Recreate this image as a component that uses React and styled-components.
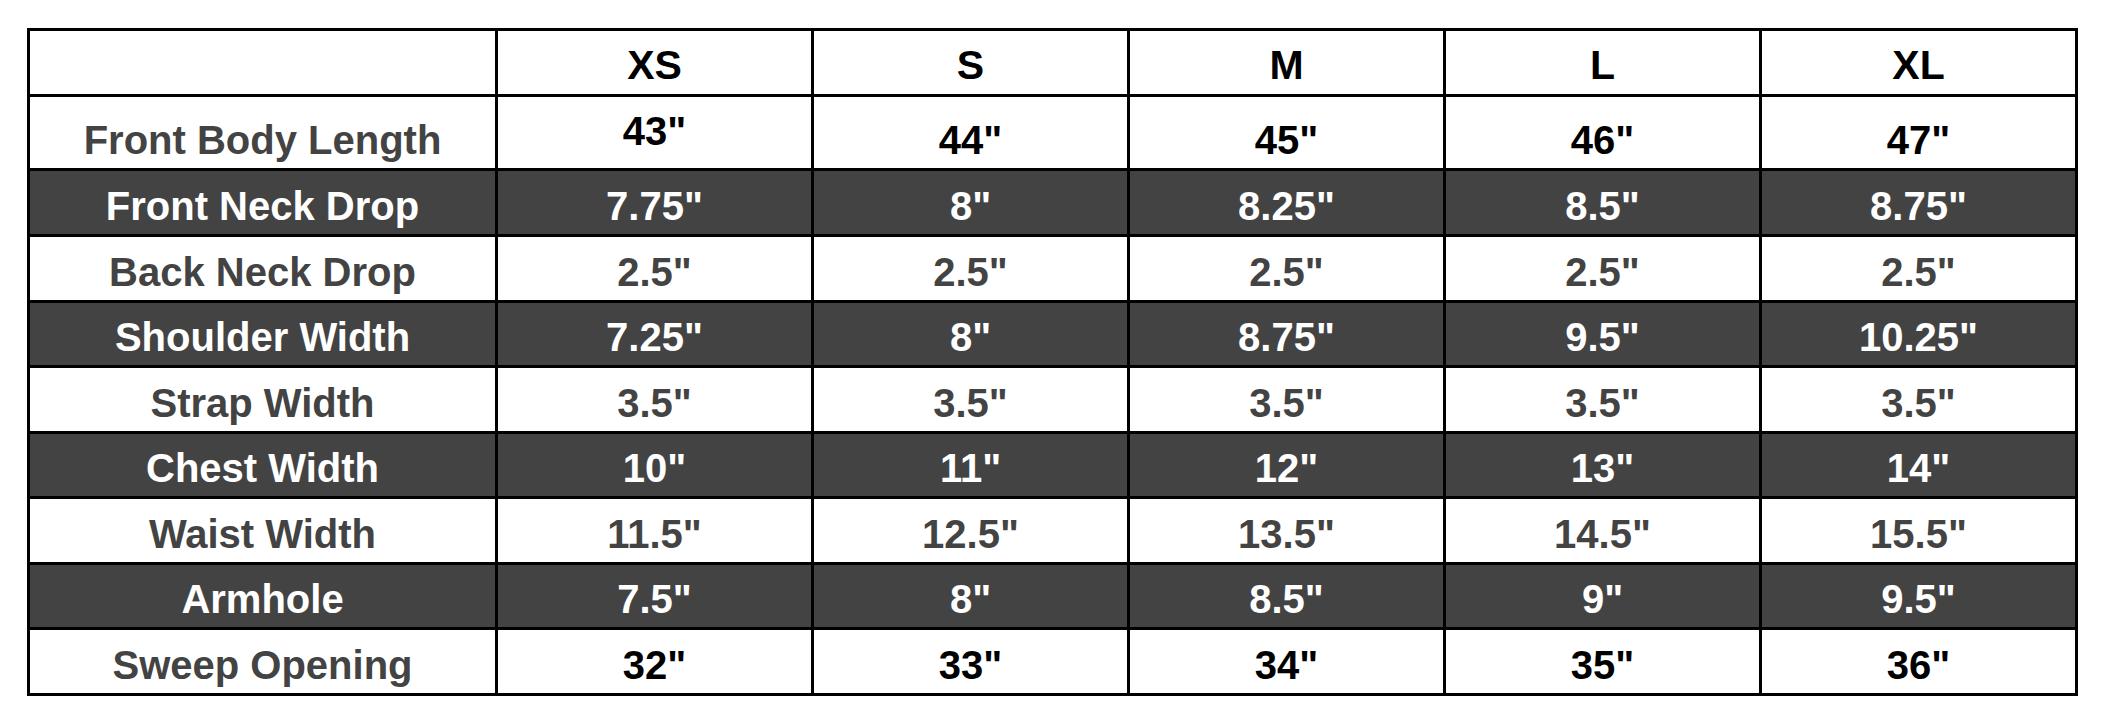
import React from "react";
import styled, { createGlobalStyle } from "styled-components";

const sizes = ["XS", "S", "M", "L", "XL"];

// tone: "light" = white row with grey text, "dark" = grey band, "strong" = white row with black values
const rows = [
  { label: "Front Body Length", tone: "strong", shift: 15, values: ['43"', '44"', '45"', '46"', '47"'], raise: [true] },
  { label: "Front Neck Drop", tone: "dark", values: ['7.75"', '8"', '8.25"', '8.5"', '8.75"'] },
  { label: "Back Neck Drop", tone: "light", values: ['2.5"', '2.5"', '2.5"', '2.5"', '2.5"'] },
  { label: "Shoulder Width", tone: "dark", values: ['7.25"', '8"', '8.75"', '9.5"', '10.25"'] },
  { label: "Strap Width", tone: "light", values: ['3.5"', '3.5"', '3.5"', '3.5"', '3.5"'] },
  { label: "Chest Width", tone: "dark", values: ['10"', '11"', '12"', '13"', '14"'] },
  { label: "Waist Width", tone: "light", values: ['11.5"', '12.5"', '13.5"', '14.5"', '15.5"'] },
  { label: "Armhole", tone: "dark", values: ['7.5"', '8"', '8.5"', '9"', '9.5"'] },
  { label: "Sweep Opening", tone: "strong", values: ['32"', '33"', '34"', '35"', '36"'] },
];

const rowHeights = [71, 63, 63, 62, 63, 62, 63, 62, 63];

function App() {
  return (
    <>
      <GlobalStyle />
      <Page>
        <SizeTable>
          <colgroup>
            <col style={{ width: 465 }} />
            {sizes.map((s) => (
              <col key={s} style={{ width: 313 }} />
            ))}
          </colgroup>
          <thead>
            <tr>
              <HeadCell />
              {sizes.map((s) => (
                <HeadCell key={s}>{s}</HeadCell>
              ))}
            </tr>
          </thead>
          <tbody>
            {rows.map((row, i) => (
              <tr key={row.label}>
                <LabelCell $tone={row.tone} $h={rowHeights[i]} $shift={row.shift}>
                  {row.label}
                </LabelCell>
                {row.values.map((v, j) => (
                  <ValueCell
                    key={j}
                    $tone={row.tone}
                    $h={rowHeights[i]}
                    $shift={row.raise && row.raise[j] ? -4 : row.shift}
                  >
                    {v}
                  </ValueCell>
                ))}
              </tr>
            ))}
          </tbody>
        </SizeTable>
      </Page>
    </>
  );
}
export default App;

const GlobalStyle = createGlobalStyle`
  body {
    margin: 0;
    background: #ffffff;
    font-family: "Liberation Sans", Arial, sans-serif;
  }
`;

const Page = styled.main`
  padding: 28px 0 0 27px;
  width: 2114px;
  height: 728px;
  box-sizing: border-box;
`;

const SizeTable = styled.table`
  table-layout: fixed;
  width: 2051px;
  border-collapse: separate;
  border-spacing: 3px;
  background: #000000;
`;

const Cell = styled.td`
  box-sizing: border-box;
  padding: 0;
  text-align: center;
  vertical-align: middle;
  font-weight: 700;
  font-size: 40px;
  line-height: 1;
  white-space: nowrap;
`;

const HeadCell = styled(Cell).attrs({ as: "th" })`
  height: 63px;
  padding-top: 6px;
  background: #ffffff;
  color: #000000;
  font-size: 41px;
`;

const toneBg = (tone) => (tone === "dark" ? "#434343" : "#ffffff");

const LabelCell = styled(Cell)`
  height: ${(p) => p.$h}px;
  padding-top: ${(p) => (p.$shift !== undefined ? p.$shift : 6)}px;
  background: ${(p) => toneBg(p.$tone)};
  color: ${(p) => (p.$tone === "dark" ? "#ffffff" : "#434343")};
`;

const ValueCell = styled(Cell)`
  height: ${(p) => p.$h}px;
  padding-top: ${(p) => (p.$shift !== undefined ? Math.max(p.$shift, 0) : 6)}px;
  padding-bottom: ${(p) => (p.$shift < 0 ? -p.$shift : 0)}px;
  background: ${(p) => toneBg(p.$tone)};
  color: ${(p) =>
    p.$tone === "dark" ? "#ffffff" : p.$tone === "strong" ? "#000000" : "#434343"};
`;
